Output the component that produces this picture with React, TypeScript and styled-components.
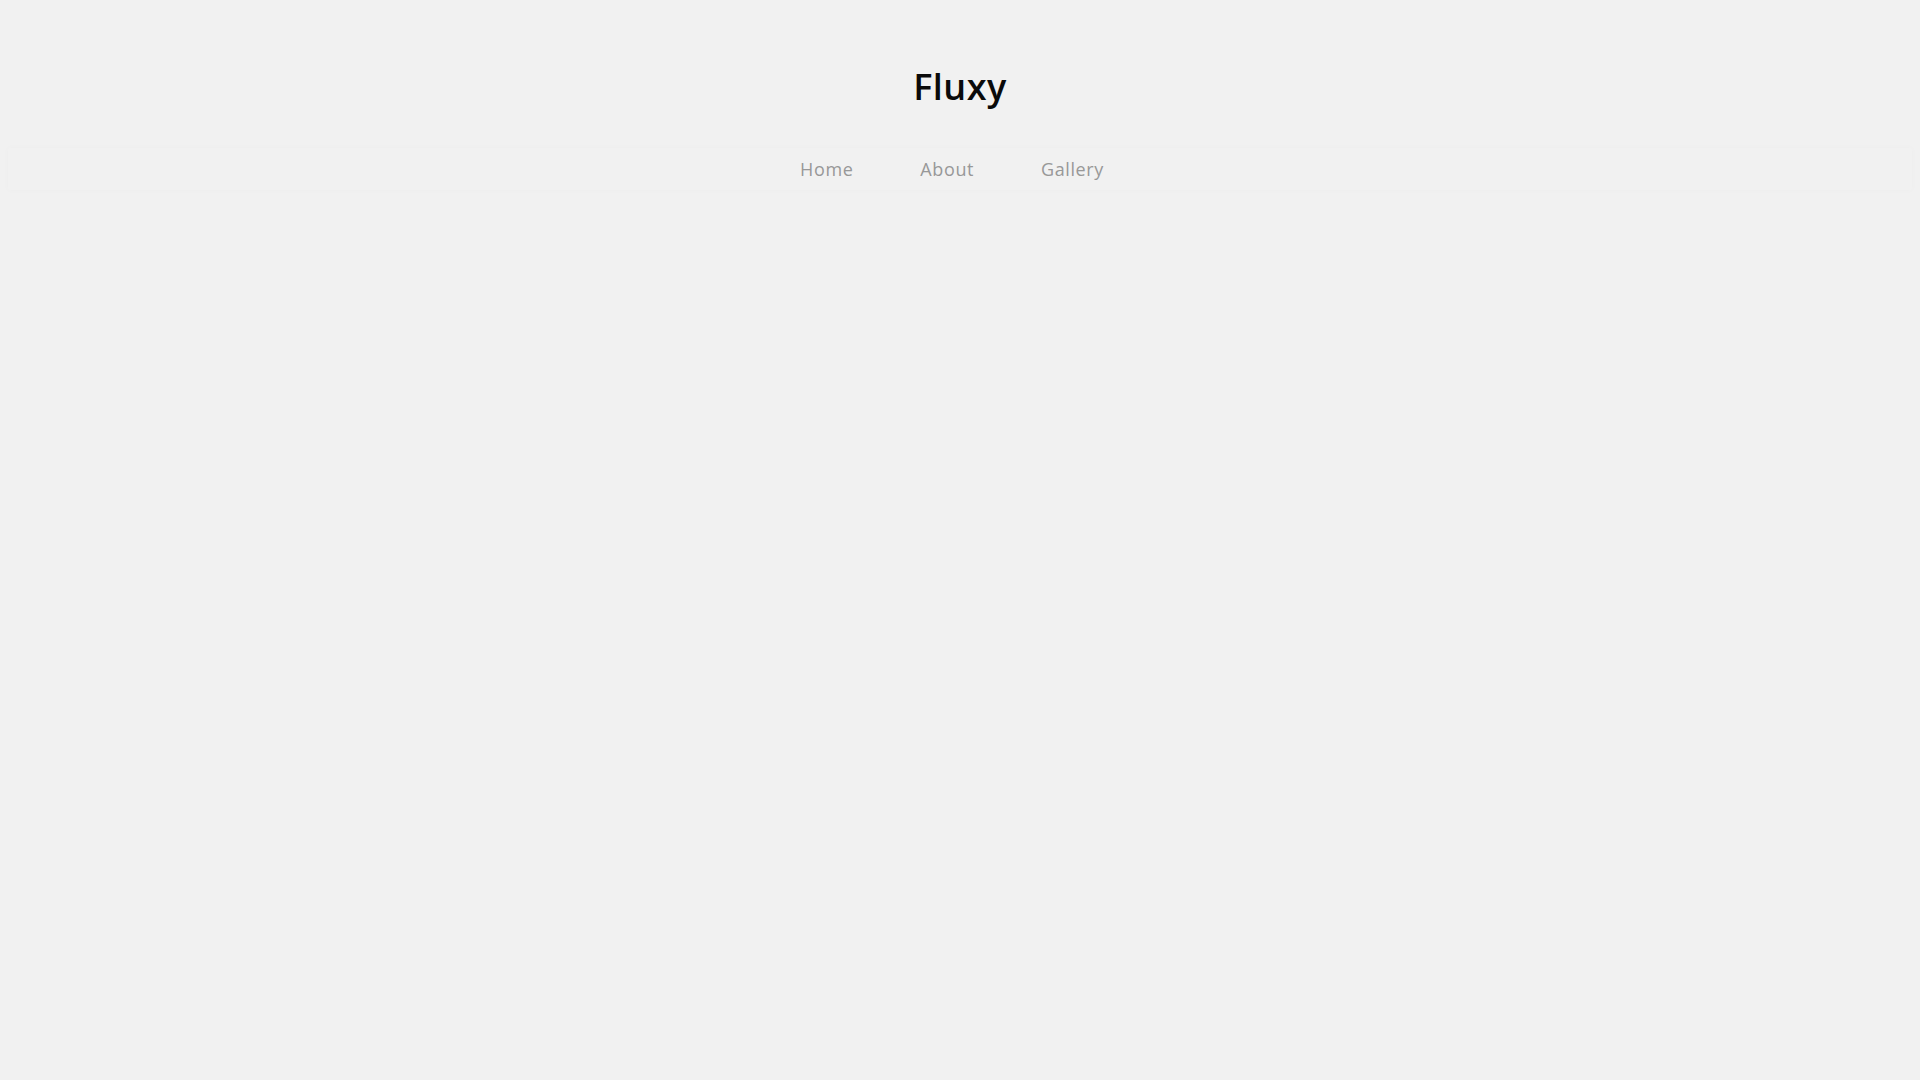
import React from "react";
import styled, { createGlobalStyle } from "styled-components";

const Global = createGlobalStyle`
  html, body {
    margin: 0;
    padding: 0;
    background: #f1f1f1;
    font-family: "Open Sans", "Noto Sans", sans-serif;
  }
  body {
    min-height: 1080px;
  }
`;

const Page = styled.div`
  min-height: 1080px;
  background: #f1f1f1;
  display: flex;
  flex-direction: column;
  align-items: stretch;
`;

const Header = styled.header`
  display: flex;
  justify-content: center;
  padding-top: 63px;
`;

const Title = styled.h1`
  margin: 0;
  font-family: "Open Sans", "Noto Sans", sans-serif;
  font-weight: 600;
  font-size: 36px;
  line-height: 48px;
  color: #0a0a0a;
  letter-spacing: 0.5px;
`;

const NavBar = styled.nav`
  margin: 37px 8px 0;
  height: 42px;
  display: flex;
  justify-content: center;
  align-items: center;
  box-shadow: 0 0 6px rgba(0, 0, 0, 0.025);
  border-radius: 2px;
`;

const NavList = styled.ul`
  list-style: none;
  margin: 0;
  padding: 0 16px 0 0;
  display: flex;
  gap: 67px;
`;

const NavItem = styled.li`
  font-family: "Open Sans", "Noto Sans", sans-serif;
  font-size: 18px;
  font-weight: 500;
  color: #989898;
  line-height: 24px;
  letter-spacing: 0.6px;
  cursor: pointer;
`;

export default function App() {
  return (
    <>
      <Global />
      <Page>
        <Header>
          <Title>Fluxy</Title>
        </Header>
        <NavBar>
          <NavList>
            <NavItem>Home</NavItem>
            <NavItem>About</NavItem>
            <NavItem>Gallery</NavItem>
          </NavList>
        </NavBar>
      </Page>
    </>
  );
}
